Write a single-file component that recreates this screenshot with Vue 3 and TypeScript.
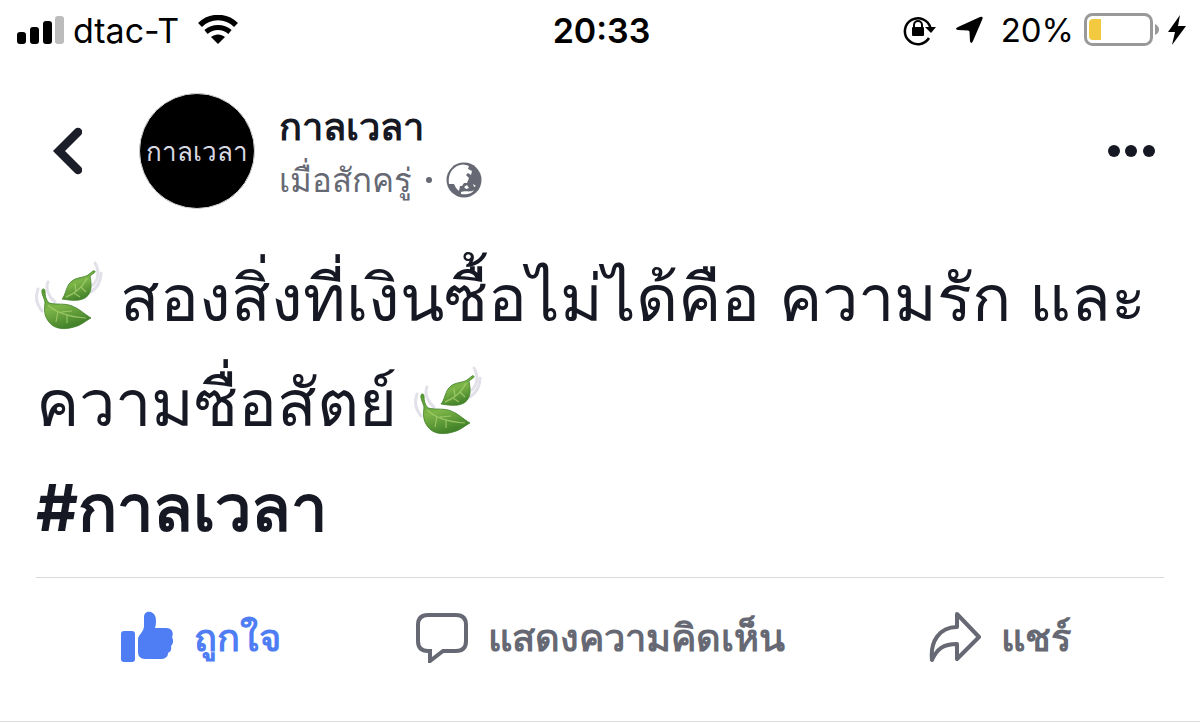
<script setup lang="ts">
import { defineComponent, h } from 'vue'

const LeafIcon = defineComponent({
  render() {
    return h('svg', { viewBox: '0 0 66 66', width: 66, height: 66, role: 'img', 'aria-label': '🍃' }, [
      h('defs', [
        h('linearGradient', { id: 'leafFill', x1: '0', y1: '0', x2: '.4', y2: '1' }, [
          h('stop', { offset: '0', 'stop-color': '#559a30' }),
          h('stop', { offset: '.5', 'stop-color': '#7db548' }),
          h('stop', { offset: '1', 'stop-color': '#44832a' }),
        ]),
      ]),
      h('g', { fill: 'none', stroke: '#e2e1e9', 'stroke-width': '3', 'stroke-linecap': 'round' }, [
        h('path', { d: 'M2 24C-1 32 1 40 6 46' }),
        h('path', { d: 'M12 17C9 24 13 32 19 37' }),
        h('path', { d: 'M59 -2C64 6 62 15 57 20' }),
        h('path', { d: 'M65 8C65 17 61 23 55 27' }),
      ]),
      h('path', { d: 'M9 38C9 34 5 29 6 25C7 23 9 24 9 26C9 31 10 35 13 38C22 40 29 38 36 41C44 44 48 49 55 53C49 56 46 60 38 62C28 65 18 64 13 57C8 51 8 44 9 38Z', fill: 'url(#leafFill)', stroke: '#41802a', 'stroke-width': '.8' }),
      h('path', { d: 'M12 40C18 46 31 52 50 53M22 46L20 57M31 50L31 58M25 47L36 46', fill: 'none', stroke: '#a9d072', 'stroke-width': '1.2', opacity: '.75' }),
      h('path', { d: 'M26 34C30 30 30 20 36 16C41 12 47 13 52 10L57 6C59 5 60 7 58 8L54 11C55 17 56 22 54 27C50 37 38 36 26 34Z', fill: 'url(#leafFill)', stroke: '#41802a', 'stroke-width': '.8' }),
      h('path', { d: 'M30 32C38 29 47 22 51 13M40 27L39 19M45 22L50 27M38 28L44 32', fill: 'none', stroke: '#a9d072', 'stroke-width': '1.4', opacity: '.75' }),
    ])
  },
})

const author = 'กาลเวลา'
</script>

<template>
  <div class="screen">
    <header class="status">
      <div class="side">
        <svg class="signal" viewBox="0 0 48 30" width="48" height="30">
          <rect x="0" y="17" width="9" height="12" rx="3" />
          <rect x="13" y="12" width="9" height="17" rx="3" />
          <rect x="26" y="6" width="9" height="23" rx="3" />
          <rect x="38" y="1" width="9" height="28" rx="3" fill="#bcbcbc" />
        </svg>
        <span>dtac-T</span>
        <svg class="wifi" viewBox="0 0 42 30" width="42" height="30">
          <path d="M3 10C13 0 29 0 39 10" fill="none" stroke="#000" stroke-width="5.500" />
          <path d="M9 17C16 11 26 11 33 17" fill="none" stroke="#000" stroke-width="5" />
          <path d="M14 22C18 18.500 24 18.500 28 22L21 29Z" />
        </svg>
      </div>
      <time class="clock">20:33</time>
      <div class="side right">
        <svg viewBox="0 0 34 32" width="34" height="32">
          <path d="M26 24A13 13 0 1 1 27.500 14" fill="none" stroke="#000" stroke-width="2.500" />
          <path d="M22 13H33L28 19Z" />
          <rect x="9" y="13" width="12" height="9" rx="1" />
          <path d="M11 14V11A4 4 0 0 1 19 11V14" fill="none" stroke="#000" stroke-width="2" />
        </svg>
        <svg class="arrow" viewBox="0 0 28 28" width="28" height="28">
          <path d="M25 1Q29 0 27 4L18 25Q16 29 15 25L14.500 16Q14.500 14.500 13 14.500L3 14Q-1 13 3 11Z" />
        </svg>
        <span class="percent">20%</span>
        <svg class="battery" viewBox="0 0 76 34" width="76" height="34">
          <rect x="1.500" y="1.500" width="66" height="30" rx="7" fill="#fff" stroke="#999" stroke-width="3" />
          <path d="M9 6H17V27H9Q5 27 5 23V10Q5 6 9 6Z" fill="#f2c93f" />
          <path d="M71 11Q75 13 75 16.500T71 22Z" fill="#999" />
        </svg>
        <svg class="bolt" viewBox="0 0 18 32" width="18" height="32">
          <path d="M12 1L0 18H7L4 31L18 12H10Z" />
        </svg>
      </div>
    </header>

    <article class="post">
      <div class="head">
        <button class="icon back" aria-label="ย้อนกลับ">
          <svg viewBox="0 0 32 50" width="32" height="50">
            <path d="M28 6L9 25L28 44" fill="none" stroke="#1b1e29" stroke-width="8.500" stroke-linecap="round" />
          </svg>
        </button>
        <div class="avatar">{{ author }}</div>
        <div class="meta">
          <h1 class="name">{{ author }}</h1>
          <p class="when">
            <span>เมื่อสักครู่</span>
            <i class="dot"></i>
            <svg viewBox="0 0 36 36" width="36" height="36">
              <circle cx="18" cy="18" r="17.500" />
              <path d="M11 4C15 2 19 2 23 4L22 7L26 9L25 13L22 11L20 13L23 16L21 21L18 21L16 24L14 24L13 29L10 26L8 22L3 22C2 15 4 8 11 4Z" fill="#fff" />
              <path d="M18 25L21 23L23 26L20 27ZM15 30C19 28 24 31 28 28C26 32 20 33 15 32ZM27 22L30 24L28 25Z" fill="#fff" />
            </svg>
          </p>
        </div>
        <button class="icon more" aria-label="เพิ่มเติม">
          <svg viewBox="0 0 48 14" width="48" height="14">
            <circle cx="7" cy="7" r="6" /><circle cx="24" cy="7" r="6" /><circle cx="42" cy="7" r="6" />
          </svg>
        </button>
      </div>

      <div class="body">
        <p><LeafIcon class="leaf" /> สองสิ่งที่เงินซื้อไม่ได้คือ ความรัก และความซื่อสัตย์ <LeafIcon class="leaf" /></p>
        <p><a class="tag" href="#">#กาลเวลา</a></p>
      </div>

      <footer class="actions">
        <button class="action liked">
          <svg viewBox="0 0 54 52" width="54" height="52">
            <rect x="1" y="20" width="14" height="31" rx="3" />
            <path d="M18 28C18 24 24 21 24 15V6C24 1 28 0 31 1C36 3 36 8 36 11Q36 14 35 17H46C52 17 54 22 52 26C54 30 53 33 51 35C52 39 50 41 48 42C48 46 45 48 40 48H25Q18 48 18 41Z" />
          </svg>
          <span>ถูกใจ</span>
        </button>
        <button class="action">
          <svg viewBox="0 0 52 52" width="52" height="52">
            <path d="M12 4H40Q50 4 50 14V30Q50 40 40 40H27L14 50V40H12Q2 40 2 30V14Q2 4 12 4Z" fill="none" stroke="#666973" stroke-width="4" />
          </svg>
          <span>แสดงความคิดเห็น</span>
        </button>
        <button class="action">
          <svg viewBox="0 0 52 52" width="52" height="52">
            <path d="M28 3L50 26L28 48V33C14 33 8 38 3 49C1 31 10 16 28 16Z" fill="none" stroke="#666973" stroke-width="4" stroke-linejoin="round" />
          </svg>
          <span>แชร์</span>
        </button>
      </footer>
    </article>
  </div>
</template>

<style>
body { margin: 0; background: #fff; }
</style>

<style scoped>
.screen { font-family: Inter, "Liberation Sans", sans-serif; color: #161823; background: #fff; }
svg { display: block; flex: none; }
.status { display: grid; grid-template-columns: 1fr auto 1fr; align-items: center; height: 60px; padding: 0 14px 0 17px; color: #000; font-size: 34px; }
.side { display: flex; align-items: center; }
.side.right { justify-content: flex-end; }
.signal { margin-right: 8px; }
.wifi { margin-left: 18px; }
.clock { font-size: 34px; font-weight: 600; }
.arrow { margin-left: 18px; }
.percent { margin: 0 10px 0 18px; font-size: 33px; }
.bolt { margin-left: 8px; }
.post { border-bottom: 1px solid #dcdde0; padding-bottom: 24px; }
.head { display: flex; align-items: center; padding: 33px 45px 0 50px; }
.icon { display: block; border: 0; padding: 0; background: none; color: inherit; }
.icon svg, .action svg, .when svg { fill: currentColor; }
.avatar { flex: none; display: flex; align-items: center; justify-content: center; width: 116px; height: 116px; margin: 0 24px 0 57px; border: 1px solid #d5d5d8; box-sizing: border-box; border-radius: 50%; background: #000; color: #d8d8e2; font-size: 26px; overflow: hidden; }
.meta { flex: 1; }
.name { margin: 0; padding-top: 4px; font-size: 38px; line-height: 54px; font-weight: 700; }
.when { display: flex; align-items: center; margin: 0; color: #666973; font-size: 33px; line-height: 54px; }
.dot { width: 6px; height: 6px; margin: 0 14px; border-radius: 50%; background: currentColor; }
.body { padding: 36px 36px 17px; font-size: 65px; line-height: 105px; }
.body p { margin: 0; }
.leaf { display: inline-block; vertical-align: -10px; overflow: visible; }
.tag { color: inherit; font-weight: 700; text-decoration: none; }
.actions { display: grid; grid-template-columns: repeat(3, 1fr); position: relative; }
.actions::before { content: ""; position: absolute; top: 0; left: 36px; right: 36px; border-top: 1px solid #d8d9dc; }
.action { display: flex; align-items: center; justify-content: center; gap: 20px; height: 120px; padding: 0; border: 0; background: none; color: #666973; font: inherit; font-size: 38px; font-weight: 700; }
.liked { color: #4e7df4; }
</style>
